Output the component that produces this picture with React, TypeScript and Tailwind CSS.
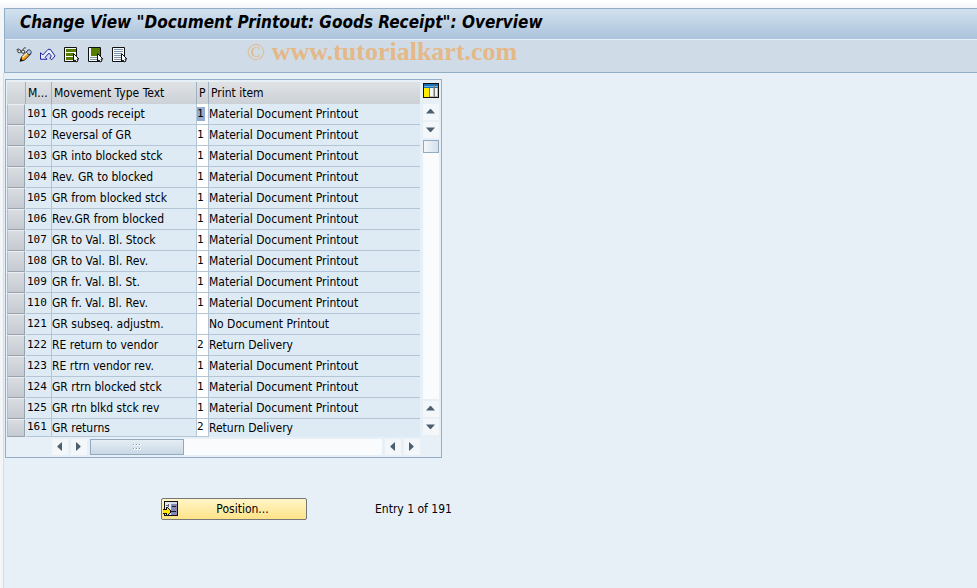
import React from 'react';

interface PrintRow {
    type: string;
    text: string;
    code: string;
    item: string;
}

const MATERIAL = 'Material Document Printout';
const RETURN = 'Return Delivery';

const rows: PrintRow[] = [
    { type: '101', text: 'GR goods receipt', code: '1', item: MATERIAL },
    { type: '102', text: 'Reversal of GR', code: '1', item: MATERIAL },
    { type: '103', text: 'GR into blocked stck', code: '1', item: MATERIAL },
    { type: '104', text: 'Rev. GR to blocked', code: '1', item: MATERIAL },
    { type: '105', text: 'GR from blocked stck', code: '1', item: MATERIAL },
    { type: '106', text: 'Rev.GR from blocked', code: '1', item: MATERIAL },
    { type: '107', text: 'GR to Val. Bl. Stock', code: '1', item: MATERIAL },
    { type: '108', text: 'GR to Val. Bl. Rev.', code: '1', item: MATERIAL },
    { type: '109', text: 'GR fr. Val. Bl. St.', code: '1', item: MATERIAL },
    { type: '110', text: 'GR fr. Val. Bl. Rev.', code: '1', item: MATERIAL },
    { type: '121', text: 'GR subseq. adjustm.', code: '', item: 'No Document Printout' },
    { type: '122', text: 'RE return to vendor', code: '2', item: RETURN },
    { type: '123', text: 'RE rtrn vendor rev.', code: '1', item: MATERIAL },
    { type: '124', text: 'GR rtrn blocked stck', code: '1', item: MATERIAL },
    { type: '125', text: 'GR rtn blkd stck rev', code: '1', item: MATERIAL },
    { type: '161', text: 'GR returns', code: '2', item: RETURN },
];

const DisplayChangeIcon = () => (
    <svg width="17" height="16" viewBox="0 0 17 16" fill="none">
        <path d="M0.500 3L2.500 1M7 2.500L9 .5H10.500" stroke="#222" />
        <circle cx="3.500" cy="4" r="1.700" fill="#e8eef4" stroke="#222" />
        <circle cx="7.500" cy="4.500" r="1.700" fill="#e8eef4" stroke="#222" />
        <path d="M4.500 14.500l1.500-4.500 6.500-6.500 3.500 3-7 7z" fill="#f2a01e" stroke="#111" />
        <path d="M7 10.500l5-5" stroke="#fff6d0" strokeWidth="1.500" />
        <path d="M11 5l2-2.500h1.500L16 4v1.500L14 8z" fill="#b9c9ec" stroke="#27345c" />
        <path d="M4 15l1-3.500 2.500 2.500z" fill="#111" />
    </svg>
);

const UndoIcon = () => (
    <svg width="17" height="14" viewBox="0 0 17 14" fill="none">
        <path
            d="M.5 4.500v7h7L5.500 9.500l4-4.500 2.500 3-1.500 2.500 2 1.500 3.500-4-5-7H8.500L3 7z"
            fill="#e4ebf7"
            stroke="#16169a"
            strokeLinejoin="round"
        />
    </svg>
);

const Cursor = () => (
    <path d="M9.500 6.500v7.500l1.500-1 1.500 2 1.500-1-1-2h2z" fill="#fff" stroke="#111" />
);

const SelectAllIcon = () => (
    <svg width="16" height="16" viewBox="0 0 16 16">
        <path d="M.5.5h12v14H.5z" fill="#f2f6ee" stroke="#111" />
        <path d="M2 2h10v3H2zM2 6h8v3H2zM2 10h8v3H2z" fill="#567d00" />
        <path d="M1 5.500h11M1 9.500h8" stroke="#fff" />
        <Cursor />
    </svg>
);

const SelectBlockIcon = () => (
    <svg width="16" height="16" viewBox="0 0 16 16">
        <path d="M.5.5h12v14H.5z" fill="#f4f7f2" stroke="#111" />
        <path d="M3 1h9v8H3z" fill="#567d00" />
        <path d="M2 10.500h7M2 12.500h8" stroke="#8095a8" />
        <Cursor />
    </svg>
);

const DeselectAllIcon = () => (
    <svg width="16" height="16" viewBox="0 0 16 16">
        <path d="M.5.5h12v14H.5z" fill="#f7fafc" stroke="#111" />
        <path d="M2 2.500h9M2 4.500h9M2 6.500h7M2 8.500h7M2 10.500h7M2 12.500h7" stroke="#8095a8" />
        <Cursor />
    </svg>
);

const TableSettingsIcon = () => (
    <svg width="16" height="16" viewBox="0 0 16 16" shapeRendering="crispEdges">
        <path d="M0 0h16v15H0z" fill="#111" />
        <path d="M1 1h14v13H1z" fill="#b5b9b9" />
        <path d="M1 1h14v4H1z" fill="#1670b4" />
        <path d="M1 3h14v1H1z" fill="#66b5e6" />
        <path d="M1 5h5v9H1z" fill="#ffed00" />
        <path d="M7 5h3v8H7zM12 5h2v8h-2z" fill="#f4f4f0" />
        <path d="M6 2h1v12H6zM11 2h1v12h-1z" fill="#777" />
    </svg>
);

const PositionIcon = () => (
    <svg width="16" height="16" viewBox="0 0 16 16" shapeRendering="crispEdges">
        <path d="M1 0h14v15H1z" fill="#111" />
        <path d="M2 1h6v13H2z" fill="#e3e9f2" />
        <path d="M8 1h6v13H8z" fill="#8488b2" />
        <path d="M8 1h6v2H8z" fill="#d4d8ea" />
        <path d="M3 4h3v1H3zM5 3h1v3H5z" fill="#667" />
        <path d="M9 5h4v1H9zM8 10h5v1H8z" fill="#1a1a2a" />
        <path d="M0 8h3V6h2v1h1v1h1v1h1v3H7v1H6v1H5v1H3v-2H0z" fill="#111" />
        <path d="M0 9h4V7h1v1h1v1h1v3H6v1H5v1H4v-2H0z" fill="#ffe600" />
    </svg>
);

const tools = [
    { label: 'Display/Change', icon: <DisplayChangeIcon /> },
    { label: 'Undo', icon: <UndoIcon /> },
    { label: 'Select all', icon: <SelectAllIcon /> },
    { label: 'Select block', icon: <SelectBlockIcon /> },
    { label: 'Deselect all', icon: <DeselectAllIcon /> },
];

const arrows = {
    up: 'M3 9.500h9L8 5H7z',
    down: 'M3 5.500h9L8 10H7z',
    left: 'M10 3v9L5.500 8V7z',
    right: 'M5 3v9l4.500-4V7z',
};

const ScrollButton = ({ direction }: { direction: keyof typeof arrows }) => (
    <button type="button" aria-label={`Scroll ${direction}`} className="size-4 shrink-0 bg-[#f3f7fa]">
        <svg width="16" height="16" viewBox="0 0 16 16">
            <path d={arrows[direction]} fill="#4b5f70" />
        </svg>
    </button>
);

const headClass = 'border-r border-[#9fb0c1] px-0.5 text-left font-normal whitespace-nowrap overflow-hidden';
const cellClass = 'border-r border-b border-[#b4c5d6] p-0 whitespace-nowrap overflow-hidden';

const PrintTable = () => (
    <table className="w-full table-fixed border-separate border-spacing-0 text-xs">
        <colgroup>
            <col className="w-[19px]" />
            <col className="w-[26px]" />
            <col className="w-[145px]" />
            <col className="w-3" />
            <col />
        </colgroup>
        <thead>
            <tr className="h-[22px] bg-linear-to-b from-[#dfe2e5] to-[#ccd1d7]">
                <th className={headClass} aria-label="Select all rows" />
                <th className={headClass}>M...</th>
                <th className={headClass}>Movement Type Text</th>
                <th className={headClass}>P</th>
                <th className="px-0.5 text-left font-normal">Print item</th>
            </tr>
        </thead>
        <tbody>
            {rows.map((row, index) => (
                <tr key={row.type} className="group h-[21px] bg-[#deebf5] last:h-[18px]">
                    <td className="p-0 align-top">
                        <button
                            type="button"
                            aria-label={`Select row ${row.type}`}
                            className="block h-[21px] w-[18px] border border-t-[#eceff2] border-r-[#98a3b0] border-b-[#98a3b0] border-l-[#b4bcc6] bg-linear-to-b from-[#d9dde2] to-[#c5cad1] group-last:h-[18px]"
                        />
                    </td>
                    <td className={`${cellClass} pl-px font-['DejaVu_Sans_Mono',monospace] text-[11px]`}>{row.type}</td>
                    <td className={cellClass}>{row.text}</td>
                    <td className={`${cellClass} bg-white font-['DejaVu_Sans_Mono',monospace] text-[11px]`}>
                        <span className={index === 0 ? 'inline-block w-2 bg-[#92add0]' : ''}>{row.code}</span>
                    </td>
                    <td className="border-b border-[#b4c5d6] p-0 group-last:border-b-0">{row.item}</td>
                </tr>
            ))}
        </tbody>
    </table>
);

const App: React.FC = () => (
    <div className="flex min-h-screen flex-col bg-linear-to-b from-white to-[#f3f6f9] to-[8px] pt-2 pl-[3px] font-['DejaVu_Sans_Condensed','DejaVu_Sans',sans-serif] text-xs text-black">
        <header className="ml-px border border-r-0 border-[#94adc6]">
            <h1 className="h-[31px] border-b border-[#e6f0f8] bg-linear-to-b from-[#d2e1ee] to-[#abc3dc] pl-[15px] text-[17px] leading-[27px] font-bold italic">
                Change View "Document Printout: Goods Receipt": Overview
            </h1>
            <div className="flex h-8 items-center bg-[#cfdce7] pb-0.5 pl-[11px]">
                <div className="flex gap-2">
                    {tools.map((tool) => (
                        <button key={tool.label} type="button" aria-label={tool.label} className="flex size-4 items-center">
                            {tool.icon}
                        </button>
                    ))}
                </div>
                <p className="ml-[119px] pb-1.5 font-['Liberation_Serif',serif] text-[26px] leading-[26px] font-bold text-[#e5b887]">
                    <span className="text-2xl leading-[26px] font-normal">©</span> www.tutorialkart.com
                </p>
            </div>
        </header>

        <main className="flex-1 border-l border-[#d3deea] bg-[#e8f0f7] pt-1.5">
            <section className="ml-px w-[437px] border border-[#94adc6] px-px pt-0.5 pb-0.5">
                <div className="flex">
                    <div className="w-[413px]">
                        <PrintTable />
                    </div>
                    <div className="ml-[3px] flex flex-col gap-0.5 pb-0.5">
                        <button type="button" aria-label="Table settings" className="flex h-5 items-start pt-px">
                            <TableSettingsIcon />
                        </button>
                        <ScrollButton direction="up" />
                        <ScrollButton direction="down" />
                        <div className="flex-1 bg-[#fafbfc]">
                            <div className="h-[13px] border border-[#94a9bd] bg-linear-to-r from-[#f2f6fa] to-[#d5e1ed]" />
                        </div>
                        <ScrollButton direction="up" />
                        <ScrollButton direction="down" />
                    </div>
                </div>
                <div className="mt-0.5 mr-5 ml-[45px] flex gap-[3px]">
                    <ScrollButton direction="left" />
                    <ScrollButton direction="right" />
                    <div className="flex flex-1 bg-[#fafbfc]">
                        <div className="flex h-4 w-[94px] items-center justify-center border border-[#94a9bd] bg-linear-to-b from-[#e5edf4] to-[#c9d8e6]">
                            <svg width="9" height="6" viewBox="0 0 9 6" shapeRendering="crispEdges">
                                <path d="M0 0h2v2H0zM3 0h2v2H3zM6 0h2v2H6zM0 4h2v2H0zM3 4h2v2H3zM6 4h2v2H6z" fill="#f7fafc" />
                                <path d="M0 0h1v1H0zM3 0h1v1H3zM6 0h1v1H6zM0 4h1v1H0zM3 4h1v1H3zM6 4h1v1H6z" fill="#7f97ad" />
                            </svg>
                        </div>
                    </div>
                    <ScrollButton direction="left" />
                    <ScrollButton direction="right" />
                </div>
            </section>

            <div className="mt-10 ml-[157px] flex items-center gap-[68px]">
                <button type="button" className="flex h-[22px] w-[146px] items-center rounded-xs border border-[#77777a] bg-linear-to-b from-[#fff5c6] to-[#ffe388] pl-px">
                    <PositionIcon />
                    <span className="flex-1">Position...</span>
                </button>
                <span>Entry 1 of 191</span>
            </div>
        </main>
    </div>
);

export default App;
